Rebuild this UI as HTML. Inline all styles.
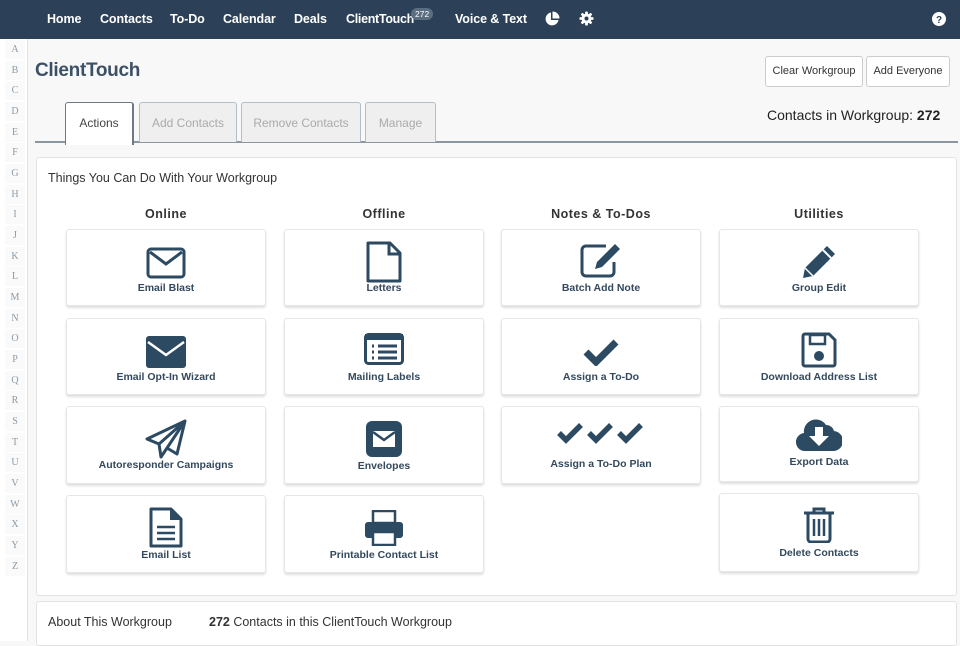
<!DOCTYPE html>
<html><head><meta charset="utf-8"><style>
*{box-sizing:border-box;margin:0;padding:0}
body{width:960px;height:641px;overflow:hidden;background:#f8f8f8;font-family:"Liberation Sans",sans-serif;position:relative;color:#333}
.nav{position:absolute;left:0;top:0;width:960px;height:39px;background:#2c4157}
.nav span{position:absolute;top:12px;color:#fff;font-size:12.5px;font-weight:bold;letter-spacing:-.1px}
.nav .badge{position:absolute;top:8px;left:411px;background:#5a6e82;color:#fff;font-size:8.5px;border-radius:7px;padding:1px 4px;font-weight:normal;letter-spacing:0}
.side{position:absolute;left:0;top:39px;width:28px;height:602px;border-right:1px solid #e2e2e2;background:#fff}
.side div{position:absolute;left:5px;width:20px;height:19px;font-family:"Liberation Serif",serif;font-size:10px;color:#8a9aa8;text-align:center;line-height:19px;background:#fafafa}
.abs{position:absolute}
.btn{position:absolute;top:56px;height:31px;border:1px solid #ccc;border-radius:3px;background:#fff;font-size:11px;color:#333;text-align:center;line-height:29px}
.tab{position:absolute;top:102px;height:40px;border:1px solid #b5bec6;border-bottom:none;border-radius:3px 3px 0 0;background:#efefef;color:#aaa;font-size:12px;text-align:center;line-height:40px}
.panel{position:absolute;left:36px;top:157px;width:921px;height:439px;background:#fff;border:1px solid #e3e3e3;border-radius:3px}
.h{position:absolute;top:207px;width:200px;text-align:center;font-size:12.5px;font-weight:bold;color:#333;letter-spacing:.5px}
.card{position:absolute;width:200px;background:#fff;border:1px solid #e6e6e6;border-radius:3px;box-shadow:0 2px 2px rgba(0,0,0,.13);text-align:center}
.card svg{position:absolute;left:50%;transform:translateX(-50%)}
.card b{position:absolute;left:0;right:0;font-size:10.5px;color:#34495e}
</style></head><body>
<div class="nav">
<span style="left:47px">Home</span><span style="left:100px">Contacts</span><span style="left:170px">To-Do</span><span style="left:223px">Calendar</span><span style="left:294px">Deals</span><span style="left:346px;letter-spacing:-.3px">ClientTouch</span><span class="badge">272</span><span style="left:455px">Voice &amp; Text</span>
<svg class="abs" style="left:544px;top:11px" width="16" height="16" viewBox="0 0 16 16"><path d="M7 1.5A6.5 6.5 0 1 0 14.5 9H7z" fill="#fff"/><path d="M8.5 0.5V7.5H15.5A7 7 0 0 0 8.5 0.5z" fill="#fff"/></svg>
<svg class="abs" style="left:579px;top:11px" width="15" height="15" viewBox="0 0 16 16"><g fill="#fff"><circle cx="8" cy="8" r="5.2"/><rect x="6.5" y="0.5" width="3" height="15" rx="1"/><rect x="6.5" y="0.5" width="3" height="15" rx="1" transform="rotate(45 8 8)"/><rect x="6.5" y="0.5" width="3" height="15" rx="1" transform="rotate(90 8 8)"/><rect x="6.5" y="0.5" width="3" height="15" rx="1" transform="rotate(135 8 8)"/></g><circle cx="8" cy="8" r="2.2" fill="#2c4157"/></svg>
<svg class="abs" style="left:932px;top:12px" width="14" height="14" viewBox="0 0 14 14"><circle cx="7" cy="7" r="7" fill="#fff"/><text x="7" y="11" text-anchor="middle" font-size="10" font-weight="bold" font-family="Liberation Sans" fill="#2c4157">?</text></svg>
</div>
<div class="side">
<div style="top:1px">A</div><div style="top:22px">B</div><div style="top:42px">C</div><div style="top:63px">D</div><div style="top:84px">E</div><div style="top:104px">F</div><div style="top:125px">G</div><div style="top:146px">H</div><div style="top:166px">I</div><div style="top:187px">J</div><div style="top:208px">K</div><div style="top:228px">L</div><div style="top:249px">M</div><div style="top:270px">N</div><div style="top:290px">O</div><div style="top:311px">P</div><div style="top:332px">Q</div><div style="top:352px">R</div><div style="top:373px">S</div><div style="top:394px">T</div><div style="top:414px">U</div><div style="top:435px">V</div><div style="top:456px">W</div><div style="top:476px">X</div><div style="top:497px">Y</div><div style="top:518px">Z</div>
</div>
<div class="abs" style="left:35px;top:60px;font-size:19px;color:#3d5166;font-weight:bold;letter-spacing:-.3px">ClientTouch</div>
<div class="btn" style="left:765px;width:98px">Clear Workgroup</div>
<div class="btn" style="left:866px;width:84px">Add Everyone</div>
<div class="abs" style="left:767px;top:107px;font-size:14px;color:#222">Contacts in Workgroup: <b>272</b></div>
<div class="abs" style="left:35px;top:141px;width:923px;height:2px;background:#8a96a0"></div>
<div class="tab" style="left:65px;width:69px;background:#fff;color:#444;border-color:#6d7a86;border-width:1px 2px 0 1px;height:43px">Actions</div>
<div class="tab" style="left:139px;width:98px">Add Contacts</div>
<div class="tab" style="left:241px;width:120px">Remove Contacts</div>
<div class="tab" style="left:365px;width:71px">Manage</div>
<div class="panel"></div>
<div class="abs" style="left:48px;top:171px;font-size:12.5px;color:#333">Things You Can Do With Your Workgroup</div>
<div class="h" style="left:66px">Online</div><div class="h" style="left:284px">Offline</div><div class="h" style="left:501px">Notes &amp; To-Dos</div><div class="h" style="left:719px">Utilities</div>

<div class="card" style="left:66px;top:229px;height:77px"><svg style="top:17px" width="40" height="32" viewBox="0 0 40 32"><rect x="2" y="2" width="36" height="28" rx="3" fill="none" stroke="#2d4a63" stroke-width="3"/><path d="M4 5L20 17L36 5" fill="none" stroke="#2d4a63" stroke-width="3"/></svg><b style="top:52px">Email Blast</b></div>
<div class="card" style="left:66px;top:318px;height:77px"><svg style="top:17px" width="40" height="32" viewBox="0 0 40 32"><rect x="0" y="0" width="40" height="32" rx="3" fill="#2d4a63"/><path d="M2 6L20 19L38 6" fill="none" stroke="#fff" stroke-width="2.5"/></svg><b style="top:52px">Email Opt-In Wizard</b></div>
<div class="card" style="left:66px;top:406px;height:78px"><svg style="top:12px" width="42" height="40" viewBox="0 0 42 40"><path d="M40 2L2 20L14 25L16 38L22 29L32 35Z M40 2L14 25 M40 2L22 29" fill="none" stroke="#2d4a63" stroke-width="3" stroke-linejoin="round"/></svg><b style="top:52px">Autoresponder Campaigns</b></div>
<div class="card" style="left:66px;top:495px;height:78px"><svg style="top:11px" width="34" height="41" viewBox="0 0 34 41"><path d="M2 2H22L32 12V39H2Z" fill="none" stroke="#2d4a63" stroke-width="3" stroke-linejoin="round"/><path d="M21 2V13H32" fill="#2d4a63"/><path d="M8 20H26M8 26H26M8 32H26" stroke="#2d4a63" stroke-width="2.5"/></svg><b style="top:53px">Email List</b></div>

<div class="card" style="left:284px;top:229px;height:77px"><svg style="top:11px" width="36" height="42" viewBox="0 0 36 42"><path d="M2 2H24L34 12V40H2Z" fill="none" stroke="#2d4a63" stroke-width="3" stroke-linejoin="round"/><path d="M23 2V13H34" fill="none" stroke="#2d4a63" stroke-width="3"/></svg><b style="top:52px">Letters</b></div>
<div class="card" style="left:284px;top:318px;height:77px"><svg style="top:14px" width="40" height="32" viewBox="0 0 40 32"><rect x="1.5" y="1.5" width="37" height="29" rx="3" fill="none" stroke="#2d4a63" stroke-width="3"/><rect x="1" y="1" width="38" height="6" fill="#2d4a63"/><path d="M8 13h2M8 19h2M8 25h2M14 13H33M14 19H33M14 25H33" stroke="#2d4a63" stroke-width="3"/></svg><b style="top:52px">Mailing Labels</b></div>
<div class="card" style="left:284px;top:406px;height:78px"><svg style="top:14px" width="36" height="36" viewBox="0 0 36 36"><rect x="0" y="0" width="36" height="36" rx="6" fill="#2d4a63"/><rect x="7" y="10" width="22" height="16" fill="#fff"/><path d="M7 11L18 19L29 11" fill="none" stroke="#2d4a63" stroke-width="2.5"/></svg><b style="top:53px">Envelopes</b></div>
<div class="card" style="left:284px;top:495px;height:78px"><svg style="top:14px" width="40" height="36" viewBox="0 0 40 36"><rect x="9" y="1" width="22" height="12" fill="none" stroke="#2d4a63" stroke-width="2.5"/><rect x="1" y="12" width="38" height="16" rx="3" fill="#2d4a63"/><rect x="9" y="22" width="22" height="13" fill="#fff" stroke="#2d4a63" stroke-width="2.5"/></svg><b style="top:53px">Printable Contact List</b></div>

<div class="card" style="left:501px;top:229px;height:77px"><svg style="top:12px" width="42" height="36" viewBox="0 0 42 36"><path d="M26 4H6a4 4 0 0 0-4 4v22a4 4 0 0 0 4 4h24a4 4 0 0 0 4-4V20" fill="none" stroke="#2d4a63" stroke-width="3"/><path d="M35 2l5 5L22 25l-7 2 2-7z" fill="#2d4a63"/></svg><b style="top:52px">Batch Add Note</b></div>
<div class="card" style="left:501px;top:318px;height:77px"><svg style="top:19px" width="36" height="28" viewBox="0 0 36 28"><path d="M3 14l10 10L33 4" fill="none" stroke="#2d4a63" stroke-width="7"/></svg><b style="top:52px">Assign a To-Do</b></div>
<div class="card" style="left:501px;top:406px;height:78px"><svg style="top:15px" width="88" height="22" viewBox="0 0 88 22"><g fill="none" stroke="#2d4a63" stroke-width="5.5"><path d="M2 11l7 7L24 3"/><path d="M32 11l7 7L54 3"/><path d="M62 11l7 7L84 3"/></g></svg><b style="top:51px">Assign a To-Do Plan</b></div>

<div class="card" style="left:719px;top:229px;height:77px"><svg style="top:14px" width="36" height="36" viewBox="0 0 36 36"><path d="M26 2l8 8L12 32 2 34l2-10z" fill="#2d4a63"/><path d="M22 6l8 8" stroke="#fff" stroke-width="2"/><path d="M4 24l8 8" stroke="#fff" stroke-width="1.5"/></svg><b style="top:52px">Group Edit</b></div>
<div class="card" style="left:719px;top:318px;height:77px"><svg style="top:13px" width="36" height="36" viewBox="0 0 36 36"><path d="M2 4a2 2 0 0 1 2-2h24l6 6v24a2 2 0 0 1-2 2H4a2 2 0 0 1-2-2z" fill="none" stroke="#2d4a63" stroke-width="3"/><rect x="9" y="3" width="15" height="9" fill="none" stroke="#2d4a63" stroke-width="2.5"/><circle cx="18" cy="24" r="5" fill="#2d4a63"/></svg><b style="top:52px">Download Address List</b></div>
<div class="card" style="left:719px;top:406px;height:76px"><svg style="top:10px" width="46" height="34" viewBox="0 0 46 34"><path d="M10 34a9 9 0 0 1-2-18 12 12 0 0 1 22-8 8 8 0 0 1 8 6 10 10 0 0 1-2 20z" fill="#2d4a63"/><path d="M19 10h8v9h6l-10 10-10-10h6z" fill="#fff"/></svg><b style="top:49px">Export Data</b></div>
<div class="card" style="left:719px;top:493px;height:79px"><svg style="top:13px" width="32" height="36" viewBox="0 0 32 36"><path d="M1 6H31M11 6V2H21V6" fill="none" stroke="#2d4a63" stroke-width="3"/><path d="M5 7V32a3 3 0 0 0 3 3H24a3 3 0 0 0 3-3V7" fill="none" stroke="#2d4a63" stroke-width="3"/><path d="M11 12V29M16 12V29M21 12V29" stroke="#2d4a63" stroke-width="2.5"/></svg><b style="top:53px">Delete Contacts</b></div>

<div class="abs" style="left:36px;top:601px;width:921px;height:45px;background:#fff;border:1px solid #e3e3e3;border-radius:3px"></div>
<div class="abs" style="left:48px;top:615px;font-size:12.5px;color:#333">About This Workgroup</div>
<div class="abs" style="left:209px;top:615px;font-size:12.5px;color:#333"><b>272</b> Contacts in this ClientTouch Workgroup</div>
</body></html>
